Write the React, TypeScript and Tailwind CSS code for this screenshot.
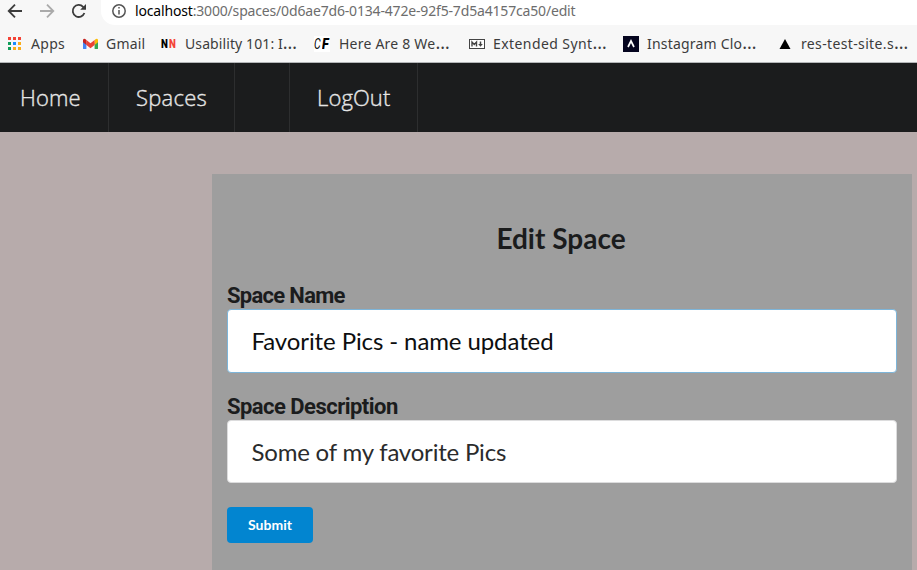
import type { ReactNode } from "react";

function Bookmark({ icon, label, className, textClass, cut = false }: { icon: ReactNode; label: string; className: string; textClass: string; cut?: boolean }) {
  return (
    <div className={`flex shrink-0 items-center whitespace-nowrap ${className}`}>
      {icon}
      <span className={textClass}>
        {label}
        {cut && <span className="text-[18px] leading-4 tracking-normal">…</span>}
      </span>
    </div>
  );
}

const appColors = ["#f44336", "#f44336", "#f44336", "#0f9d58", "#1a8cff", "#fbad18", "#0f9d58", "#fbad18", "#fbad18"];

function AppsIcon() {
  return (
    <svg width="14" height="14" viewBox="0 0 14 14" shapeRendering="crispEdges">
      {appColors.map((c, i) => (
        <rect key={i} x={(i % 3) * 5} y={Math.floor(i / 3) * 5} width="3" height="3" fill={c} />
      ))}
    </svg>
  );
}

function GmailIcon() {
  return (
    <svg width="15" height="12" viewBox="0 0 15 12">
      <path d="M0 3v7.5Q0 11 .8 11h2.6V4.5Z" fill="#4285f4" />
      <path d="M11.6 4.5V11h2.6q.8 0 .8-.5V3Z" fill="#34a853" />
      <path d="M11.6 2v5L15 4.2V2Q14.4-.3 11.6 2Z" fill="#fbbc04" />
      <path d="M3.4 2 7.5 5.3 11.6 2v5L7.5 10.2 3.4 7Z" fill="#ea4335" />
      <path d="M0 2v2.2L3.4 7V2Q.8-.3 0 2Z" fill="#c5221f" />
    </svg>
  );
}

function MarkdownIcon() {
  return (
    <svg width="16" height="16" viewBox="0 0 16 16" fill="none" stroke="#444">
      <rect x=".5" y="3.5" width="15" height="9" fill="#fff" strokeWidth="1" />
      <path d="M3 10.5V6l2.25 2.5L7.5 6v4.5" strokeWidth="1.4" />
      <path d="M11.5 5.5V9" strokeWidth="1.5" />
      <path d="M9.2 8h4.6l-2.3 2.7Z" fill="#444" stroke="none" />
    </svg>
  );
}

function Toolbar() {
  return (
    <div className="flex h-[25px] bg-[#f7f7f7]">
      <svg width="101" height="25" viewBox="0 0 101 25" fill="none" strokeWidth="1.8">
        <path d="M22 11H9M15 4.6 8.7 11l6.3 6.4" stroke="#3c3c3c" />
        <path d="M40 11h13M47 4.6l6.3 6.4-6.3 6.4" stroke="#aaa" />
        <path d="M84.4 13A6 6 0 1 1 83.1 6.8L85 8.7" stroke="#3c3c3c" />
        <path d="M86 4v5.8h-5.8Z" fill="#3c3c3c" />
      </svg>
      <div className="flex flex-1 rounded-bl-[14px] bg-white pl-[11px]">
        <svg width="15" height="22" viewBox="0 0 15 22" fill="none" stroke="#555" strokeWidth="1.5">
          <circle cx="7" cy="11" r="6.2" />
          <path d="M7 10v4.5M7 7v1.6" />
        </svg>
        <div className="ml-2 whitespace-nowrap font-['Noto_Sans',sans-serif] text-[14px] leading-[22px] tracking-[-0.17px] text-[#6d6d6d]">
          <span className="text-black">localhost</span>:3000/spaces/0d6ae7d6-0134-472e-92f5-7d5a4157ca50/edit
        </div>
      </div>
    </div>
  );
}

function Bookmarks() {
  return (
    <div className="flex h-[38px] overflow-hidden border-b border-[#b4b6b8] bg-[#f7f7f7] pl-2 font-['Noto_Sans',sans-serif] text-[14px] leading-[37px] text-[#3c3c3c]">
      <Bookmark className="w-[75px]" icon={<AppsIcon />} label="Apps" textClass="ml-[9px] tracking-[0.3px]" />
      <Bookmark className="w-[78px]" icon={<GmailIcon />} label="Gmail" textClass="ml-[8px] tracking-[0.2px]" />
      <Bookmark
        className="w-[153px]"
        icon={
          <span className="flex w-4 font-['Roboto',sans-serif] text-[13px] leading-4 font-black">
            <span className="w-2 origin-left scale-x-[0.75] text-black">N</span>
            <span className="w-2 origin-left scale-x-[0.75] text-[#f44336]">N</span>
          </span>
        }
        label="Usability 101: I"
        textClass="ml-[8px] tracking-[0.1px]"
        cut
      />
      <Bookmark
        className="w-[155px]"
        icon={
          <span className="flex h-4 w-4 bg-white font-['Roboto',sans-serif] text-[14px] leading-4 text-black italic">
            <span className="w-[8px] origin-left scale-x-[0.75]">C</span>
            <span className="w-2 origin-left scale-x-[0.9] font-black">F</span>
          </span>
        }
        label="Here Are 8 We"
        textClass="ml-[9px] tracking-[0.22px]"
        cut
      />
      <Bookmark className="w-[154px]" icon={<MarkdownIcon />} label="Extended Synt" textClass="ml-[8px] tracking-[0.42px]" cut />
      <Bookmark
        className="w-[154px]"
        icon={
          <svg width="16" height="16" viewBox="0 0 16 16">
            <path d="M0 0h16v16H0Z" fill="#05051f" />
            <path d="m5 11 3-6 3 6" fill="none" stroke="#fff" strokeWidth="1.7" />
          </svg>
        }
        label="Instagram Clo"
        textClass="ml-[8px] tracking-[0.2px]"
        cut
      />
      <Bookmark
        className="w-[140px]"
        icon={
          <svg width="16" height="16" viewBox="0 0 16 16">
            <path d="m8 3 5.5 10h-11Z" fill="#000" />
          </svg>
        }
        label="res-test-site.s"
        textClass="ml-[8px] tracking-[0.36px]"
        cut
      />
    </div>
  );
}

function Nav() {
  return (
    <nav className="flex h-[69px] bg-[#1b1c1d] font-['Open_Sans',sans-serif] text-[22px] leading-[69px] font-light text-[#e6e6e6] [-webkit-text-stroke:0.35px_#e6e6e6]">
      <a className="w-[109px] border-r border-[#2d2e2f] pl-[20px] tracking-[0.15px]">Home</a>
      <a className="w-[126px] border-r border-[#2d2e2f] pl-[27px] tracking-[0.25px]">Spaces</a>
      <a className="w-[55px] border-r border-[#2d2e2f]" />
      <a className="w-[128px] border-r border-[#2d2e2f] pl-[27px] tracking-[0.1px]">LogOut</a>
    </nav>
  );
}

export default function App() {
  return (
    <div className="flex h-[570px] w-[917px] flex-col overflow-hidden bg-[#b7abab]">
      <Toolbar />
      <Bookmarks />
      <Nav />
      <main className="mt-[42px] ml-[212px] w-[700px] flex-1 bg-[#9e9e9e] px-[15px] font-['Lato',sans-serif] text-[#1b1c1d]">
        <h2 className="mt-[46px] pr-[2px] text-center text-[28px] leading-9 font-bold">Edit Space</h2>
        <form className="flex flex-col items-start">
          <label className="mt-[26px] h-[27px] font-['Roboto',sans-serif] text-[22px] leading-[27px] font-bold tracking-[-0.7px]">Space Name</label>
          <input
            className="h-[64px] w-full rounded border border-[#7db5d9] bg-white px-[23.5px] pb-[2px] text-[24px] tracking-[-0.1px] text-[#0d0e0f] outline-none"
            defaultValue="Favorite Pics - name updated"
          />
          <label className="mt-5 h-[27px] font-['Roboto',sans-serif] text-[22px] leading-[27px] font-bold tracking-[-0.53px]">Space Description</label>
          <input
            className="h-[63px] w-full rounded border border-[#dcdcdd] bg-white px-[23.5px] text-[24px] tracking-[-0.2px] text-[#2a2b2c] outline-none"
            defaultValue="Some of my favorite Pics"
          />
          <button type="button" className="mt-6 h-9 w-[86px] rounded bg-[#0285d0] pb-[2px] text-[14px] font-bold text-white">
            Submit
          </button>
        </form>
      </main>
    </div>
  );
}
